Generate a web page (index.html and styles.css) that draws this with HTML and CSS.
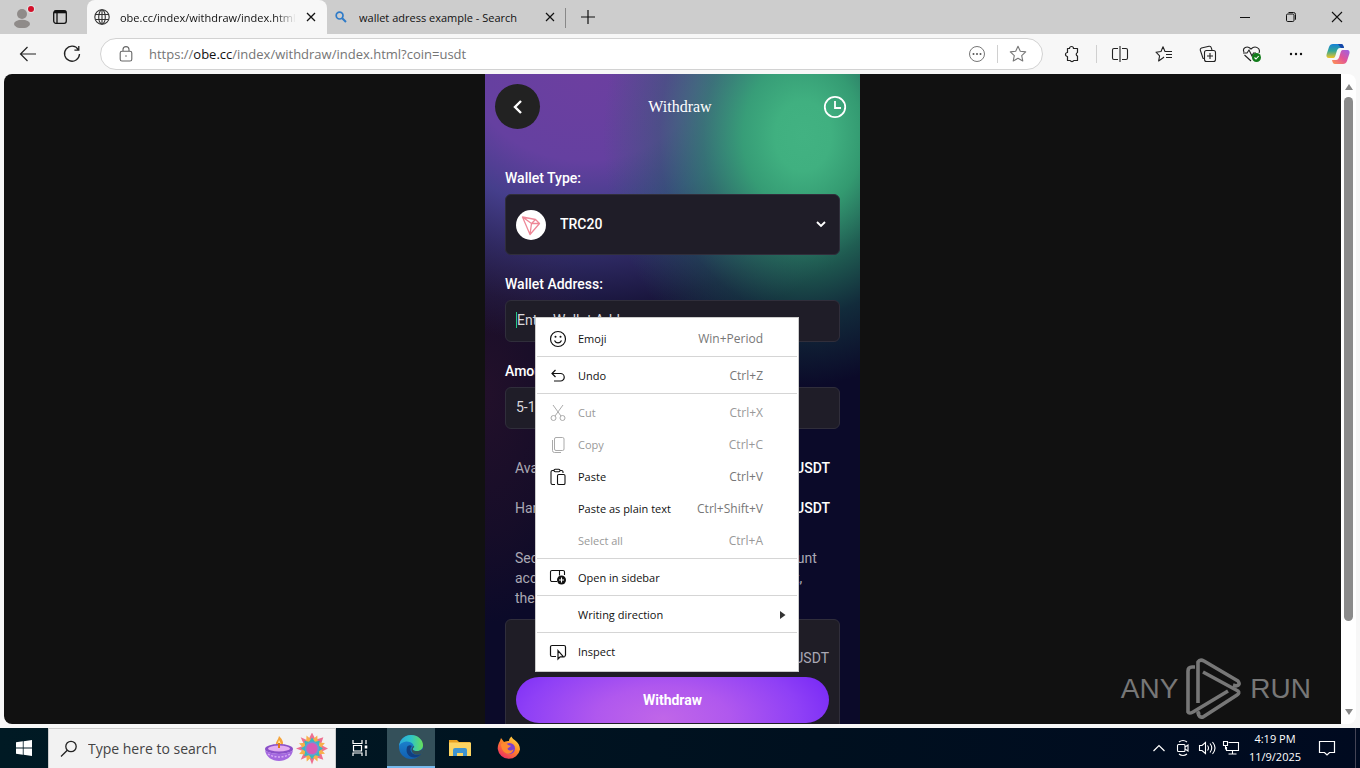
FILE: index.html
```html
<!DOCTYPE html>
<html lang="en">
<head>
<meta charset="utf-8">
<title>Withdraw</title>
<link rel="stylesheet" href="styles.css">
</head>
<body>
<div class="tabbar">
  <button class="profile" aria-label="Profile"><svg width="24" height="28" viewBox="0 0 24 28"><circle cx="9" cy="14" r="5" fill="#8f8b89"/><ellipse cx="9" cy="24" rx="8" ry="4.2" fill="#8f8b89"/><circle cx="18" cy="9" r="4" fill="#e2e2e2"/><circle cx="18" cy="9" r="3" fill="#d3102a"/></svg></button>
  <button class="workspaces" aria-label="Tab actions"><svg width="16" height="16" viewBox="0 0 16 16" fill="none" stroke="#111" stroke-width="1.3"><rect x="1.7" y="1.7" width="12.6" height="12.6" rx="2.2"/><path d="M2 3h12" stroke-width="2.6"/><path d="M5 4v10"/></svg></button>
  <div class="tab active">
    <svg width="16" height="16" viewBox="0 0 16 16" fill="none" stroke="#333" stroke-width="1.1"><circle cx="8" cy="8" r="7.2"/><ellipse cx="8" cy="8" rx="3.3" ry="7.2"/><path d="M1.5 5.5h13M1.5 10.5h13M8 1v14"/></svg>
    <span class="tab-title faded">obe.cc/index/withdraw/index.html</span>
    <button class="close" aria-label="Close tab"><svg width="10" height="10" viewBox="0 0 10 10" stroke="#111" stroke-width="1.3"><path d="M1 1l8 8M9 1l-8 8"/></svg></button>
  </div>
  <div class="tab">
    <svg width="16" height="16" viewBox="0 0 16 16" fill="none" stroke="#2f7bc8" stroke-width="1.7"><circle cx="6.6" cy="6.6" r="3.4"/><path d="M9.2 9.2l3.8 3.8" stroke-width="2"/></svg>
    <span class="tab-title">wallet adress example - Search</span>
    <button class="close" aria-label="Close tab"><svg width="10" height="10" viewBox="0 0 10 10" stroke="#111" stroke-width="1.2"><path d="M1 1l8 8M9 1l-8 8"/></svg></button>
  </div>
  <button class="newtab" aria-label="New tab"><svg width="14" height="14" viewBox="0 0 14 14" stroke="#111" stroke-width="1.2"><path d="M7 0v14M0 7h14"/></svg></button>
  <div class="winbtns">
    <button aria-label="Minimize"><svg width="12" height="12" viewBox="0 0 12 12" stroke="#111"><path d="M1 6.5h10"/></svg></button>
    <button aria-label="Restore"><svg width="12" height="12" viewBox="0 0 12 12" stroke="#111" fill="none"><rect x="1.5" y="3" width="7.5" height="7.5" rx="1.2"/><path d="M3.5 1.5h5a2 2 0 0 1 2 2v5.2"/></svg></button>
    <button aria-label="Close"><svg width="12" height="12" viewBox="0 0 12 12" stroke="#111" stroke-width="1.1"><path d="M1 1l10 10M11 1L1 11"/></svg></button>
  </div>
</div>

<div class="toolbar">
  <button aria-label="Back"><svg width="18" height="16" viewBox="0 0 18 16" fill="none" stroke="#222" stroke-width="1.2"><path d="M17 8H1.5M8.5 1L1.5 8l7 7"/></svg></button>
  <button aria-label="Refresh"><svg width="18" height="18" viewBox="0 0 18 18" fill="none" stroke="#222" stroke-width="1.3"><path d="M15.3 4.6A7.5 7.5 0 1 0 16.5 9M15.8 1v4.2h-4.4"/></svg></button>
  <div class="address">
    <svg width="14" height="16" viewBox="0 0 14 16" fill="none" stroke="#666" stroke-width="1.1"><rect x="1.2" y="5.2" width="11.6" height="9.8" rx="1.8"/><path d="M4 5V3.6a3 3 0 0 1 6 0V5"/><circle cx="7" cy="10" r=".8" fill="#666" stroke="none"/></svg>
    <span class="url">https://<b>obe.cc</b>/index/withdraw/index.html?coin=usdt</span>
    <button aria-label="Site options"><svg width="18" height="18" viewBox="0 0 18 18" fill="none" stroke="#777"><circle cx="9" cy="9" r="7.5"/><g fill="#555" stroke="none"><circle cx="5.5" cy="9" r="1"/><circle cx="9" cy="9" r="1"/><circle cx="12.5" cy="9" r="1"/></g></svg></button>
    <i class="vline"></i>
    <button aria-label="Favorite"><svg width="18" height="18" viewBox="0 0 18 18" fill="none" stroke="#777" stroke-width="1.1" stroke-linejoin="round"><path d="M9 1.3l2.3 5 5.4.6-4 3.7 1.1 5.4L9 13.3 4.2 16l1.1-5.4-4-3.7 5.4-.6z"/></svg></button>
  </div>
  <div class="tools">
    <button aria-label="Extensions"><svg width="18" height="18" viewBox="0 0 18 18" fill="none" stroke="#222" stroke-width="1.2" stroke-linejoin="round"><path d="M4.500 3.500h2a2 2 0 1 1 4 0h4V7.500a1.900 1.900 0 0 0 0 3.600V15.500h-3.700a2 2 0 0 1-3.600 0H4.500v-4a2 2 0 1 1 0-4z"/></svg></button>
    <i class="vline"></i>
    <button aria-label="Split screen"><svg width="18" height="18" viewBox="0 0 18 18" fill="none" stroke="#222" stroke-width="1.1"><path d="M7 3.5H3A1.5 1.5 0 0 0 1.500 5v8A1.500 1.500 0 0 0 3 14.500h4M11 3.500h4A1.500 1.500 0 0 1 16.500 5v8a1.500 1.500 0 0 1-1.500 1.500h-4M9 1v16"/></svg></button>
    <button aria-label="Favorites"><svg width="18" height="18" viewBox="0 0 18 18" fill="none" stroke="#222" stroke-width="1.1" stroke-linejoin="round"><path d="M9 12l-1.500 1.200L3.600 16l1-5.200L1 7.200l5-.7L8 1.800l2 4.700h7M11 9.500h6M11 12.500h6"/></svg></button>
    <button aria-label="Collections"><svg width="18" height="18" viewBox="0 0 18 18" fill="none" stroke="#222" stroke-width="1.1"><rect x="5.5" y="5.5" width="11" height="11" rx="2"/><path d="M11 8v6M8 11h6M5 13.500l-1-.3L1.200 5A2 2 0 0 1 2.500 3L10 1.300a2 2 0 0 1 2.300 1.500L13 5"/></svg></button>
    <button aria-label="Browser essentials"><svg width="20" height="18" viewBox="0 0 20 18" fill="none" stroke="#222" stroke-width="1.1"><path d="M2 7C0 3 5 0 9 4c4-4 10-1 8 4M2.500 10L9 16M1 8h4l2-3 3 6 1.500-3H14"/><circle cx="14.500" cy="12.500" r="4.500" fill="#127c1b" stroke="none"/><path d="M12.500 12.500l1.500 1.500 2.700-3" stroke="#fff"/></svg></button>
    <button aria-label="Settings and more"><svg width="18" height="18" viewBox="0 0 18 18" fill="#111"><circle cx="4" cy="9" r="1.200"/><circle cx="9" cy="9" r="1.200"/><circle cx="14" cy="9" r="1.200"/></svg></button>
    <button aria-label="Copilot"><svg width="24" height="22" viewBox="0 0 24 22"><defs><linearGradient id="ca" x1="0" y1="0" x2="0" y2="1"><stop offset="0" stop-color="#1581d8"/><stop offset=".5" stop-color="#35a895"/><stop offset="1" stop-color="#f2c423"/></linearGradient><linearGradient id="cb" x1="1" y1="0" x2="0" y2="1"><stop offset="0" stop-color="#9a62e8"/><stop offset=".5" stop-color="#e25596"/><stop offset="1" stop-color="#ff9650"/></linearGradient></defs><path d="M7 1h8c2 0 2.500 2 3 4h-4c-2 0-3 2-3.500 4l-1.200 4c-.5 1.800-1.500 2-3 2H3c-2.500 0-3-2-2.300-4L3 4c.7-2 2-3 4-3z" fill="url(#ca)"/><path d="M17 21H9c-2 0-2.500-2-3-4h4c2 0 3-2 3.500-4l1.200-4c.5-1.800 1.500-2 3-2H21c2.500 0 3 2 2.300 4L21 18c-.7 2-2 3-4 3z" fill="url(#cb)"/><path d="M12 1h3c2 0 2.500 2 3 4h-3z" fill="#1746a8"/></svg></button>
  </div>
</div>

<div class="viewport">
  <main class="page">
    <div class="phone">
      <header class="head">
        <button class="back" aria-label="Back"><svg width="12" height="16" viewBox="0 0 12 16" fill="none" stroke="#fff" stroke-width="2.4"><path d="M9 2L3 8l6 6"/></svg></button>
        <h1>Withdraw</h1>
        <button class="history" aria-label="History"><svg width="24" height="24" viewBox="0 0 24 24" fill="none" stroke="#fff" stroke-width="1.8"><circle cx="12" cy="12" r="10.2"/><path d="M12 6v7h6"/></svg></button>
      </header>
      <form class="form">
        <label for="type">Wallet Type:</label>
        <div class="selectbox">
          <svg width="30" height="30" viewBox="0 0 30 30" fill="none" stroke="#ee8797" stroke-width="1.3" stroke-linejoin="round"><circle cx="15" cy="15" r="15" fill="#fff" stroke="none"/><path d="M6.500 7l13 2.500 4 4L14 24.500zM6.500 7l9 6.500L14 24.500M15.500 13.500l4-4M15.500 13.500h8"/></svg>
          <select id="type"><option>TRC20</option></select>
          <svg class="chev" width="10" height="8" viewBox="0 0 10 8" fill="none" stroke="#fff" stroke-width="1.9"><path d="M1 1l4 4 4-4"/></svg>
        </div>
        <label for="addr">Wallet Address:</label>
        <div class="field"><i class="caret"></i><input id="addr" type="text" placeholder="Enter Wallet Address"></div>
        <label for="amount">Amount:</label>
        <div class="field"><input id="amount" type="text" placeholder="5-10000"></div>
      </form>
      <div class="rows">
        <div class="row"><span>Available</span><span class="unit">USDT</span></div>
        <div class="row"><span>Handling fee</span><span class="unit">USDT</span></div>
      </div>
      <p class="note">Security check: please confirm that your account<br>accepts this currency and the network you set,<br>then continue</p>
      <section class="total">
        <div class="total-unit">USDT</div>
        <button class="submit">Withdraw</button>
      </section>

      <ul class="menu">
        <li><button><svg width="18" height="18" viewBox="0 0 18 18" fill="none" stroke="#111" stroke-width="1.2"><circle cx="9" cy="9" r="7.5"/><path d="M5.500 10.500a3.800 3.800 0 0 0 7 0"/><g fill="#111" stroke="none"><circle cx="6.500" cy="6.800" r="1"/><circle cx="11.500" cy="6.800" r="1"/></g></svg><span>Emoji</span><kbd>Win+Period</kbd></button></li>
        <li class="sep"></li>
        <li><button><svg width="18" height="18" viewBox="0 0 18 18" fill="none" stroke="#111" stroke-width="1.2"><path d="M6.500 3L3 6.500 6.500 10M3 6.500h8.500a3.500 3.500 0 0 1 0 7.500H5"/></svg><span>Undo</span><kbd>Ctrl+Z</kbd></button></li>
        <li class="sep"></li>
        <li><button class="off"><svg width="18" height="18" viewBox="0 0 18 18" fill="none" stroke="#aaa"><circle cx="4.500" cy="14" r="2.500"/><circle cx="13.500" cy="14" r="2.500"/><path d="M4 1l8 11M14 1L6 12"/></svg><span>Cut</span><kbd>Ctrl+X</kbd></button></li>
        <li><button class="off"><svg width="18" height="18" viewBox="0 0 18 18" fill="none" stroke="#aaa"><rect x="5.500" y="1.500" width="9.500" height="13" rx="1.500"/><path d="M3.500 4v10.500a2 2 0 0 0 2 2H12"/></svg><span>Copy</span><kbd>Ctrl+C</kbd></button></li>
        <li><button><svg width="18" height="18" viewBox="0 0 18 18" fill="none" stroke="#111" stroke-width="1.1"><path d="M6 16.500H3.500a1.500 1.500 0 0 1-1.500-1.500V4a1.500 1.500 0 0 1 1.500-1.500H5M11 2.500h1.500A1.500 1.500 0 0 1 14 4v1"/><rect x="5" y="1.200" width="6" height="2.600" rx="1.200"/><rect x="8.500" y="6.500" width="7.500" height="10" rx="1.300"/></svg><span>Paste</span><kbd>Ctrl+V</kbd></button></li>
        <li><button><i class="noicon"></i><span>Paste as plain text</span><kbd>Ctrl+Shift+V</kbd></button></li>
        <li><button class="off"><i class="noicon"></i><span>Select all</span><kbd>Ctrl+A</kbd></button></li>
        <li class="sep"></li>
        <li><button><svg width="18" height="18" viewBox="0 0 18 18" fill="none" stroke="#111" stroke-width="1.1"><path d="M8 12.500H3A1.500 1.500 0 0 1 1.500 11V3A1.500 1.500 0 0 1 3 1.500h11a1.500 1.500 0 0 1 1.500 1.500V6M10.500 1.500v5"/><circle cx="12.500" cy="11" r="4.500" fill="#111" stroke="none"/><path d="M12.500 8.500v5M10 11h5" stroke="#fff"/></svg><span>Open in sidebar</span></button></li>
        <li class="sep"></li>
        <li><button><i class="noicon"></i><span>Writing direction</span><svg class="sub" width="6" height="8" viewBox="0 0 6 8" fill="#333"><path d="M0 0l5.500 4L0 8z"/></svg></button></li>
        <li class="sep"></li>
        <li><button><svg width="18" height="18" viewBox="0 0 18 18" fill="none" stroke="#111" stroke-width="1.2"><path d="M7 13.500H3A1.500 1.500 0 0 1 1.500 12V4A1.500 1.500 0 0 1 3 2.500h12A1.500 1.500 0 0 1 16.500 4v8a1.500 1.500 0 0 1-1.500 1.500M9 7.500v8.500l2.200-2.200h3.300z"/></svg><span>Inspect</span></button></li>
      </ul>
    </div>
    <div class="watermark">
      <span>ANY</span>
      <svg width="56" height="62" viewBox="0 0 56 62" fill="none" stroke="#777" stroke-width="3.6" stroke-linejoin="round"><path d="M9 9H6Q2 9 2 13V54Q3 56 7 54L42 33"/><path d="M12 45V4Q14 1 18 3L52 23Q55 27 50 28L47 27"/><path d="M17 14L52 33Q54 35 51 37L17 59Q13 60 12 55L14 54"/></svg>
      <span>RUN</span>
    </div>
  </main>
  <div class="scroll"><i class="up"></i><i class="thumb"></i><i class="down"></i></div>
</div>

<footer class="taskbar">
  <button class="start" aria-label="Start"><svg width="16" height="16" viewBox="0 0 16 16" fill="#fff"><path d="M0 2.300l6.800-1v6.300H0zM7.600 1.200L16 0v7.600H7.600zM0 8.400h6.800v6.300l-6.800-1zM7.600 8.400H16V16l-8.400-1.200z"/></svg></button>
  <div class="search">
    <svg width="18" height="18" viewBox="0 0 18 18" fill="none" stroke="#222" stroke-width="1.3"><circle cx="11" cy="6.500" r="5.200"/><path d="M7.300 10.300L1 16.500"/></svg>
    <input type="text" aria-label="Search" placeholder="Type here to search">
    <svg width="64" height="32" viewBox="0 0 64 32"><path d="M14 3c4 4 5 7 3 10h-5c-3-3 1-5 2-10z" fill="#f5a43a"/><path d="M14 7c2 3 2 4 1 6h-2c-1-2 0-3 1-6z" fill="#fff0a0"/><ellipse cx="14" cy="16" rx="14" ry="5" fill="#8a50c8"/><ellipse cx="14" cy="15.500" rx="11" ry="3" fill="#e3aef0"/><path d="M0 17c1 7 7 11 14 11s13-4 14-11c-5 5-23 5-28 0z" fill="#a468df"/><path d="M3 21c6 4 16 4 22 0" stroke="#d8a8f4" stroke-width="1.5" stroke-dasharray="2 1.500" fill="none"/><path d="M13 10h2v5h-2z" fill="#e07818"/><g transform="translate(47 15.500)"><g fill="#ee6f8f"><path id="pt" d="M-4-8L0-16 4-8 3 8 0 16-3 8z"/><use href="#pt" transform="rotate(45)"/><use href="#pt" transform="rotate(90)"/><use href="#pt" transform="rotate(135)"/></g><g fill="#f7b04a" transform="rotate(22)"><path id="pg" d="M-3-8L0-14 3-8 3 8 0 14-3 8z"/><use href="#pg" transform="rotate(45)"/><use href="#pg" transform="rotate(90)"/><use href="#pg" transform="rotate(135)"/></g><g fill="#38b8bd"><path id="pb" d="M-4-5L0-11 4-5 4 5 0 11-4 5z"/><use href="#pb" transform="rotate(45)"/><use href="#pb" transform="rotate(90)"/><use href="#pb" transform="rotate(135)"/></g><circle r="7" fill="#6f95d8"/><circle r="5.500" fill="#d55bb5"/></g></svg>
  </div>
  <button aria-label="Task view"><svg width="18" height="18" viewBox="0 0 18 18" fill="none" stroke="#fff" stroke-width="1.2"><path d="M2 1v3.500h9V1M2 17v-3h9v3M2.500 6.500h8v5.500h-8zM15 1v4M15 11v6"/><path d="M13.700 6.500h2.600v3h-2.600z" fill="#fff" stroke="none"/></svg></button>
  <button class="running" aria-label="Microsoft Edge"><svg width="26" height="26" viewBox="0 0 26 26"><defs><linearGradient id="eg"><stop offset="0" stop-color="#2ba7dc"/><stop offset=".5" stop-color="#2fc4c7"/><stop offset="1" stop-color="#68df58"/></linearGradient><linearGradient id="eb" x1="0" y1="0" x2="0" y2="1"><stop offset="0" stop-color="#1e8bd4"/><stop offset="1" stop-color="#115fb1"/></linearGradient></defs><circle cx="13" cy="13" r="12" fill="url(#eb)"/><path d="M1 12C2 5 7 1 13 1c7 0 12 5 12 10 0 4-3 6-6 6-4 0-5-1.500-3.500-3.500C17 10 12 7 8 7.500 4 8 2 10 1 12z" fill="url(#eg)"/><path d="M9 13c-2 7 3 11 8 10.500 3-.5 5-1.500 6-3.500-5 2-10 0-10.500-4C12.200 14 13 13 14 12c-2-1.500-4-.8-5 1z" fill="#123f80"/><path d="M15.500 13.500C14 15.500 15 17 19 17c2 0 4-.5 6-2.500 0 2-.5 3.500-2 5.500-5 2-9 0-9.500-4 0-1.500 1-3 2-4 1 .5 1 1 0 1.500z" fill="#34505a"/></svg></button>
  <button aria-label="File Explorer"><svg width="24" height="20" viewBox="0 0 24 20"><path d="M1 2h8l2 2h11v5H1z" fill="#e8a020"/><path d="M1 4.500h22V18H1z" fill="#fcd462"/><path d="M5 18v-6a2 2 0 0 1 2-2h10a2 2 0 0 1 2 2v6h-4v-3H9v3z" fill="#3f93cf"/></svg></button>
  <button aria-label="Firefox"><svg width="24" height="24" viewBox="0 0 24 24"><defs><linearGradient id="ff" x1=".9" y1="0" x2=".2" y2="1"><stop offset="0" stop-color="#ffe44b"/><stop offset=".45" stop-color="#ff8a26"/><stop offset="1" stop-color="#ee2766"/></linearGradient></defs><path d="M3 5l1-3 3 4c2-1 4-1 5-1 0-2 1-3 2.500-4.500 1 3.500 8.500 5 8.500 13A11.300 11.300 0 0 1 .7 13C.7 10 1.500 7 3 5z" fill="url(#ff)"/><circle cx="12.500" cy="12.500" r="5.500" fill="#7b3fce"/><path d="M4 8c3-2 6-1 7 1 1 .5 2 .5 3 .8-.5 1.700-3 1.500-3.500 3 .5 2 4 2.500 6 .2-.5 4-4 5.500-7 4.500C6 16 4 12 4 8z" fill="#ff8930"/></svg></button>
  <div class="tray">
    <button aria-label="Hidden icons"><svg width="14" height="18" viewBox="0 0 14 18" fill="none" stroke="#fff" stroke-width="1.2"><path d="M1.500 12L7 6.500l5.500 5.500"/></svg></button>
    <button aria-label="Meet now"><svg width="14" height="18" viewBox="0 0 14 18" fill="none" stroke="#fff" stroke-width="1.1"><rect x="1.500" y="5.500" width="7.500" height="7" rx="1"/><path d="M9 8l3-2v6l-3-2M3 3q4-3 8 0M3 15q4 3 8 0"/></svg></button>
    <button aria-label="Volume"><svg width="18" height="18" viewBox="0 0 18 18" fill="none" stroke="#fff" stroke-width="1.1"><path d="M1.500 6.500h2.500l3.500-3v11l-3.500-3H1.500zM9.500 6.500q2 2.500 0 5M12 4.500q3.500 4.500 0 9M14.500 3q5 6 0 12"/></svg></button>
    <button aria-label="Network"><svg width="18" height="18" viewBox="0 0 18 18" fill="none" stroke="#fff" stroke-width="1.1"><path d="M6.500 3.500h10v8h-12V8M10.500 11.500v3M6.500 15h8M1.500 2.500h4v4h-4zM3.500 6.500v4"/></svg></button>
    <time><span>4:19 PM</span><span>11/9/2025</span></time>
    <button class="notif" aria-label="Notifications"><svg width="18" height="18" viewBox="0 0 18 18" fill="none" stroke="#fff" stroke-width="1.2"><path d="M1.500 2.500h15v11h-5L9 16l-2.500-2.500h-5z"/></svg></button>
  </div>
</footer>
</body>
</html>
```
FILE: styles.css
```css
* { box-sizing: border-box; }
body {
  margin: 0;
  height: 100vh;
  display: flex;
  flex-direction: column;
  overflow: hidden;
  background: #f7f7f7;
  font-family: "Open Sans", "Noto Sans", sans-serif;
  font-size: 12px;
  color: #111;
}
button { border: 0; padding: 0; background: none; font: inherit; color: inherit; display: flex; align-items: center; justify-content: center; }
svg { flex: none; display: block; }
i { flex: none; }

.tabbar { flex: none; height: 34px; display: flex; align-items: stretch; background: #cdcdcd; }
.profile { width: 44px; padding-left: 6px; align-items: flex-start; }
.workspaces { width: 32px; }
.tab { width: 239px; display: flex; align-items: center; gap: 10px; padding: 0 6px; }
.tab.active { width: 240px; margin-left: 11px; padding: 0 11px 0 7px; background: #f7f7f7; border-radius: 8px 8px 0 0; }
.tab-title { flex: 1; overflow: hidden; white-space: nowrap; font-size: 11px; }
.faded { -webkit-mask-image: linear-gradient(90deg, #000 88%, transparent); mask-image: linear-gradient(90deg, #000 88%, transparent); }
.tab:not(.active) { padding-right: 10px; border-right: 1px solid #888; border-image: linear-gradient(transparent 25%, #888 25%, #888 80%, transparent 80%) 1; }
.newtab { width: 44px; }
.winbtns { margin-left: auto; display: flex; }
.winbtns button { width: 46px; }

.toolbar { flex: none; height: 40px; display: flex; align-items: center; padding: 0 11px 0 6px; }
.toolbar > button { width: 44px; height: 32px; }
.address { flex: 1; height: 32px; margin-left: 6px; display: flex; align-items: center; gap: 11px; padding: 0 15px 0 18px; background: #fff; border: 1px solid #d2d2d2; border-radius: 16px; }
.url { flex: 1; font-size: 13px; color: #757575; padding-left: 5px; }
.url b { font-weight: 400; color: #111; }
.vline { width: 1px; height: 18px; background: #d0d0d0; }
.tools { display: flex; align-items: center; padding-left: 20px; }
.tools .vline { margin: 0 14px 0 15px; }
.tools button { width: 18px; height: 32px; }
.tools button + button { margin-left: 26px; }
.tools button:last-child { margin-left: 24px; margin-right: 2px; }

.viewport { flex: 1; min-height: 0; display: flex; margin: 0 4px 4px; background: #fff; border-radius: 8px; overflow: hidden; }
.page { flex: 1; position: relative; background: #111; overflow: hidden; }
.scroll { width: 15px; display: flex; flex-direction: column; align-items: center; padding: 10px 0 9px; gap: 7px; }
.up, .down { border: 4px solid transparent; }
.up { border-top: 0; border-bottom: 6px solid #888; }
.down { border-bottom: 0; border-top: 6px solid #888; }
.thumb { width: 9px; height: 83%; margin-bottom: auto; border-radius: 5px; background: #8b8b8b; }

.phone {
  position: relative;
  width: 375px;
  min-height: 100%;
  margin: 0 auto;
  font-family: Roboto, sans-serif;
  font-size: 14px;
  color: #fff;
  background:
    radial-gradient(ellipse 200px 250px at 318px 62px, #42b282 0, #40b080 14%, rgba(54, 168, 118, .9) 30%, rgba(43, 140, 105, .65) 50%, rgba(31, 105, 92, .35) 72%, transparent),
    radial-gradient(ellipse 350px 270px at 100px 0, #6c3fa0 0, #6540a0 32%, rgba(75, 68, 150, .9) 50%, rgba(60, 54, 122, .7) 68%, rgba(50, 42, 95, .35) 86%, transparent),
    radial-gradient(ellipse 120px 230px at 0 320px, #22102a 0, rgba(30, 15, 40, .6) 60%, transparent),
    #0b0a29;
}
.head { display: flex; align-items: center; justify-content: space-between; padding: 10px; }
.head h1 { margin: 0; font: 400 16px/20px "Liberation Serif", serif; }
.back { width: 45px; height: 45px; border-radius: 50%; background: #222; }
.history { width: 30px; height: 30px; }
.form { padding: 29px 20px 0; }
.form label { display: block; height: 26px; line-height: 20px; font-weight: 500; }
.selectbox, .field { display: flex; align-items: center; padding: 0 10px; background: #1f1d28; border: 1px solid #302e3b; border-radius: 6px; }
.selectbox { height: 61px; margin-bottom: 19px; }
.selectbox select { flex: 1; appearance: none; border: 0; background: none; color: inherit; font: 500 14px/20px Roboto, sans-serif; padding: 0 0 2px 14px; margin: 0; }
.chev { margin-right: 3px; }
.field { height: 42px; margin-bottom: 19px; padding-bottom: 2px; }
.field input { flex: 1; min-width: 0; border: 0; padding: 0; background: none; color: #fff; font: 14px/20px Roboto, sans-serif; }
.field input::placeholder { color: #d8d7dc; }
.caret { width: 1px; height: 16px; background: #25c983; }
.rows { padding: 0 30px; }
.row { height: 40px; display: flex; align-items: center; justify-content: space-between; color: #aaa8b4; }
.unit { color: #fff; font-weight: 500; }
.note { margin: 0; padding: 20px 30px 0; line-height: 20px; color: #aaa8b4; white-space: nowrap; }
.total { margin: 11px 20px 0; height: 130px; padding: 28px 10px 0; background: #1f1d26; border: 1px solid #302e3b; border-radius: 6px; }
.total-unit { text-align: right; line-height: 20px; color: #aaa8b4; padding-bottom: 9px; }
.submit { width: 100%; height: 46px; border-radius: 23px; font-weight: 700; background: radial-gradient(ellipse 190px 90px at 47% 90%, #c066e8 0, #b058ee 35%, #8f40f6 72%, #7426f6 100%); }

.menu { position: absolute; left: 50px; top: 243px; width: 264px; margin: 0; padding: 4px 0; list-style: none; background: #fff; border: 1px solid #ccc; color: #111; font: 11px/16px "Open Sans", "Noto Sans", sans-serif; }
.menu button { width: 100%; height: 32px; padding: 1px 35px 0 13px; gap: 11px; }
.menu span { flex: 1; text-align: left; }
.menu kbd { font: inherit; font-size: 12px; color: #777; }
.menu .off, .menu .off kbd { color: #999; }
.menu .sep { height: 1px; margin: 2px 1px; background: #d5d5d5; }
.noicon { width: 18px; height: 18px; }
.sub { margin-right: -23px; }

.watermark { position: absolute; right: 30px; bottom: 4px; display: flex; align-items: center; gap: 8px; color: #777; font: 28px/60px "Liberation Sans Narrow", "Liberation Sans", sans-serif; }

.taskbar { flex: none; height: 40px; display: flex; background: linear-gradient(90deg, #001a24, #00101f 60%, #000a20); color: #fff; }
.taskbar > button { width: 48px; margin-left: 1px; }
.taskbar > .start, .search + button { margin: 0; }
.taskbar > .running { margin-left: 3px; background: #34505a; border-bottom: 2px solid #76b9ed; }
.search { width: 288px; display: flex; align-items: center; gap: 10px; padding: 0 6px 0 11px; background: #f2f2f2; border: 1px solid #ccc; border-bottom: 0; }
.search input { flex: 1; min-width: 0; border: 0; padding: 0; background: none; font: 14px/20px "Open Sans", sans-serif; }
.search input::placeholder { color: #444; }
.tray { margin-left: auto; margin-right: 4px; display: flex; align-items: center; padding-right: 4px; border-right: 1px solid #445; }
.tray button { width: 24px; height: 40px; }
.tray time { width: 64px; display: flex; flex-direction: column; align-items: center; font-size: 11px; line-height: 18px; }
.tray .notif { width: 40px; margin-right: 4px; }
```
